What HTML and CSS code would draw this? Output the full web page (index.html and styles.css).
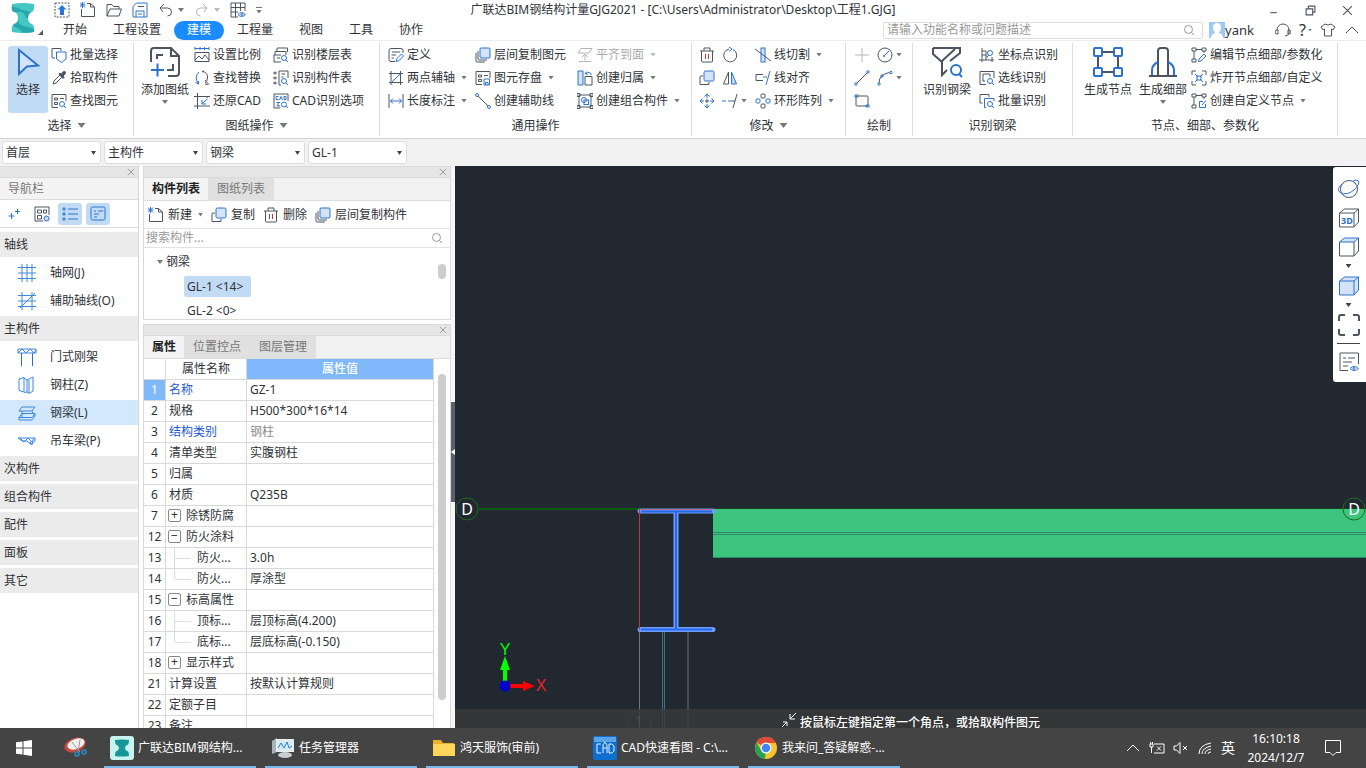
FILE: index.html
```html
<!DOCTYPE html>
<html lang="zh-CN">
<head>
<meta charset="utf-8">
<title>广联达BIM钢结构计量GJG2021</title>
<link rel="stylesheet" href="styles.css">
</head>
<body>
<svg class="sprite" aria-hidden="true">
  <symbol id="i-upload" viewBox="0 0 16 16"><rect x="1" y="1" width="14" height="14" stroke-dasharray="2 1.2"/><path class="bf" d="M8 3l4.500 4.500H10V13H6V7.500H3.500z"/></symbol>
  <symbol id="i-new" viewBox="0 0 16 16"><path d="M1.500 7v7.500h13V5l-4-3.500H7M10.500 1.500V5h4"/><path class="b" d="M0 .5l5 5M5 .5l-5 5M2.500 0v6M0 3h5.500"/></symbol>
  <symbol id="i-open" viewBox="0 0 16 16"><path d="M1 14V2.500h5l1.500 2H13V7M1 14L4 7h11.500L13 14z"/></symbol>
  <symbol id="i-save" viewBox="0 0 16 16"><path class="b" d="M1 15V4.500L4.500 1H15v14zM4 15V9h8v6M6 12h4"/><path d="M6 4.500h6"/></symbol>
  <symbol id="i-undo" viewBox="0 0 16 16"><path d="M2 6h7.500a4 4 0 0 1 0 8M6 2L2 6l3 4"/></symbol>
  <symbol id="i-redo" viewBox="0 0 16 16"><path class="g" d="M13 6H6.500a4 4 0 0 0 0 8M9 2l4 4-3 4"/></symbol>
  <symbol id="i-gridview" viewBox="0 0 16 16"><path d="M1 1h14v8M1 1v14h7M1 5.500h14M1 10h7M5.500 1v14M10.500 1v8"/><path class="b" d="M8 12.500q3.500-4 7.500 0-4 4-7.500 0z"/><circle class="b" cx="12" cy="12.500" r="1"/></symbol>
  <symbol id="i-search" viewBox="0 0 16 16"><circle class="m" cx="7.500" cy="7.500" r="4"/><path class="m" d="M10.500 10.500l2.500 2.500"/></symbol>
  <symbol id="i-x" viewBox="0 0 10 10"><path d="M1 1l8 8M9 1L1 9"/></symbol>

  <symbol id="i-cursor" viewBox="0 0 28 28"><path class="b w2" fill="#d3e3fa" d="M5 2l19 15.500-11 1L5 26z"/></symbol>
  <symbol id="i-sheet" viewBox="0 0 32 32"><path class="w2" d="M2 16V5q0-3 3-3h17l8 8v17q0 3-3 3h-8M22 2v8h8M8 13V9h6M24 18v6h-6"/><path class="b w2" d="M2 24h13M8.500 17.500v13"/></symbol>
  <symbol id="i-funnel" viewBox="0 0 32 32"><path class="w2" d="M2 2h27v5L19 15M2 2v6l9 8v13l5-5M11 15L24 3"/><circle class="b w2" cx="25" cy="24" r="5"/><path class="b w2" d="M28 28l3 3"/></symbol>
  <symbol id="i-nodes" viewBox="0 0 32 32"><path class="w2" d="M11 6h10M11 26h10M6 11v10M26 11v10"/><g class="b w2"><rect x="2" y="2" width="8" height="8" rx="1"/><rect x="22" y="2" width="8" height="8" rx="1"/><rect x="2" y="22" width="8" height="8" rx="1"/><rect x="22" y="22" width="8" height="8" rx="1"/></g></symbol>
  <symbol id="i-detail" viewBox="0 0 32 32"><path class="w2" d="M11 30V5q0-3 3-3h4q3 0 3 3v25"/><path class="b w2" d="M11 16q-6 3-6 8v6M21 16q6 3 6 8v6"/><path class="w2" d="M2 30h28"/></symbol>

  <symbol id="i-batch" viewBox="0 0 16 16"><path d="M4 11H1.500Q1 11 1 10V1.500h9V4"/><path class="b" d="M5.500 5h9.500v7l-4.500 3.500L5.500 12z"/></symbol>
  <symbol id="i-pick" viewBox="0 0 16 16"><path d="M2 14l1-3 6-6 2 2-6 6z"/><path class="df" d="M8 4l1-1 1.500 1L12.500 1.500Q15 1 14.500 3.500L12 6l1 1.500-1 1z"/></symbol>
  <symbol id="i-find" viewBox="0 0 16 16"><path d="M7 14.500H1V1.500h14V8M3.500 5h3v2h-3zM3.500 9.500h3v2h-3zM9 5.500h4"/><circle class="b" cx="11" cy="11" r="2.500"/><path class="b" d="M13 13l2 2"/></symbol>
  <symbol id="i-scale" viewBox="0 0 16 16"><path class="b" d="M1 1.500h14M1 0v3M6 0v3M10.500 0v3M15 0v3"/><path d="M1 5.500h14v9H1zM1 13l4-4 3 3 3-4 4 5"/></symbol>
  <symbol id="i-replace" viewBox="0 0 16 16"><path class="b" d="M5 2Q0 7 4 13M1.500 12.500L4.500 14V11"/><path d="M8 1.500Q14 2 13.500 8q0 3-2.500 5M8 2l2-1.500M11 10l4 4.500M11 14l3 .5"/></symbol>
  <symbol id="i-restore" viewBox="0 0 16 16"><path d="M3.500 0v16M0 3.500h16M0 13h16M13 3.500V5"/><path class="b" d="M13.500 6L8 10.500M8 7v4h4"/></symbol>
  <symbol id="i-floors" viewBox="0 0 16 16"><path d="M4 4V1h10.500v4M2 4.500h11V8M1 8h7M1 8v7h7M2 4.500V8M4 11h3"/><circle class="b" cx="11" cy="11" r="2.500"/><path class="b" d="M13 13l2 2"/></symbol>
  <symbol id="i-parts" viewBox="0 0 16 16"><path d="M0 3h4M0 8h4M0 13h4M2 1.500v3M2 6.500v3M2 11.500v3M6 15V1h9v7M6 15h2M8.500 4H12M8.500 7h2"/><circle class="b" cx="11" cy="11" r="2.500"/><path class="b" d="M13 13l2 2"/></symbol>
  <symbol id="i-cad" viewBox="0 0 16 16"><path d="M7 15H1V1h14v7"/><path class="b" d="M5.500 3.500H3v3h2.500M6.500 7l1.500-3.500L9.500 7M11 3.500v3h2v-3zM3.500 9.500H7M5 9.500V13M3.500 13H7"/><circle class="b" cx="11" cy="11.500" r="2.500"/><path class="b" d="M13 13l2 2"/></symbol>

  <symbol id="i-define" viewBox="0 0 16 16"><path d="M7 14.500H3q-2 0-2-2v-9q0-2 2-2h10q2 0 2 2V6M4 5h8M3.500 8H8M3.500 11H6"/><path class="b" d="M8 14.500L8.500 12l5-5 2 2-5 5z"/></symbol>
  <symbol id="i-twopoint" viewBox="0 0 16 16"><path d="M3 1v14M1 3.500h14M12.500 1v14M1 12.500h14"/><path class="b" d="M3 13L13 3"/></symbol>
  <symbol id="i-length" viewBox="0 0 16 16"><path d="M1 1v14M15 1v14"/><path class="b" d="M2.500 8h11M5 5.500L2.500 8 5 10.500M11 5.500L13.500 8 11 10.500"/></symbol>
  <symbol id="i-layercopy" viewBox="0 0 16 16"><rect class="b" x="5" y="1" width="10" height="10" rx="1" fill="#d3e3fa"/><path d="M3 4v8q0 1 1 1h8M1 6v8q0 1 1 1h8"/></symbol>
  <symbol id="i-copy" viewBox="0 0 16 16"><path d="M4 6H1.500Q1 6 1 7v7.500h9V12"/><rect class="b" x="5" y="1" width="10" height="10" rx="1.500" fill="#d3e3fa"/></symbol>
  <symbol id="i-store" viewBox="0 0 16 16"><path d="M7 14.500H1V1.500h14V8M3.500 5h3v2h-3zM3.500 9.500h3v2h-3zM9 5.500h4"/><path class="b" d="M9 9h5.500v6H9zM10.500 15v-2.500h2.500V15"/></symbol>
  <symbol id="i-auxline" viewBox="0 0 16 16"><circle class="b" cx="2" cy="2" r="1.500"/><circle class="b" cx="14" cy="14" r="1.500"/><path d="M3 3l10 10"/></symbol>
  <symbol id="i-align" viewBox="0 0 16 16"><path class="g" d="M4 1.500h11L12 6H1zM2 14.500h12M8 7v6M5 10l3-3 3 3"/></symbol>
  <symbol id="i-belong" viewBox="0 0 16 16"><path class="b" d="M1 1h5v14H1z" fill="#d3e3fa"/><path d="M8 6.500h7V15H8z"/><path class="b" d="M8.500 3.500Q14 1 14 5M10 1.500l-2 2 2.500 1"/></symbol>
  <symbol id="i-combo" viewBox="0 0 16 16"><path d="M2 2h12v12H2zM0 .5h3v3H0zM13 .5h3v3h-3zM0 12.500h3v3H0zM13 12.500h3v3h-3z"/><circle class="b" cx="7" cy="7" r="2.500"/><rect class="b" x="7" y="7" width="4.500" height="4.500"/></symbol>

  <symbol id="i-trash" viewBox="0 0 16 16"><path d="M1 4h14M5 4V1h6v3M2.500 4v10q0 1 1 1h9q1 0 1-1V4"/><path class="r" d="M6.500 7v5M9.500 7v5"/></symbol>
  <symbol id="i-rotate" viewBox="0 0 16 16"><path d="M7 2a6.500 6.500 0 1 0 4 .5"/><path class="b" d="M7 0l3 2-3 2.500"/></symbol>
  <symbol id="i-mirror" viewBox="0 0 16 16"><path d="M6.500 2v12H1.500z"/><path class="b" fill="#c3daf8" d="M9.500 2v12h5z"/></symbol>
  <symbol id="i-move" viewBox="0 0 16 16"><path class="b" d="M5.500 3.500L8 1l2.500 2.500M5.500 12.500L8 15l2.500-2.500M3.500 5.500L1 8l2.500 2.500M12.500 5.500L15 8l-2.500 2.500M8 1v4M8 11v4M1 8h4M11 8h4"/><path d="M8 6v4M6 8h4"/></symbol>
  <symbol id="i-extend" viewBox="0 0 16 16"><path class="b" d="M0 8h4M6 8h4"/><path d="M15 1l-4 14M10 8h3"/></symbol>
  <symbol id="i-cut" viewBox="0 0 16 16"><rect class="b" x="6" y="1" width="4" height="14" fill="#d3e3fa"/><path d="M0 2l16 12"/></symbol>
  <symbol id="i-linealign" viewBox="0 0 16 16"><path d="M8 4.500H1v6h7"/><path class="b" d="M15 1l-4 14M12 7h-4"/></symbol>
  <symbol id="i-array" viewBox="0 0 16 16"><rect x="6" y="1" width="4" height="4" rx="1"/><rect x="6" y="11" width="4" height="4" rx="1"/><rect class="b" x="1" y="6" width="4" height="4" rx="1"/><rect class="b" x="11" y="6" width="4" height="4" rx="1"/></symbol>
  <symbol id="i-point" viewBox="0 0 16 16"><path class="g" d="M8 1v5M8 10v5M1 8h5M10 8h5M7 7h2v2H7z"/></symbol>
  <symbol id="i-circle" viewBox="0 0 16 16"><circle cx="8" cy="8" r="7"/><path class="b" d="M7 9l5-5M6.500 8.500h1v1h-1z"/></symbol>
  <symbol id="i-line" viewBox="0 0 16 16"><path d="M3 13L13 3"/><circle class="b" cx="2" cy="14" r="1.200"/><circle class="b" cx="14" cy="2" r="1.200"/></symbol>
  <symbol id="i-arc" viewBox="0 0 16 16"><path d="M2 13Q2 4 13 2.500"/><circle class="b" cx="2" cy="14" r="1.200"/><circle class="b" cx="14" cy="2.500" r="1.200"/><circle class="b" cx="5" cy="6" r="1.200"/></symbol>
  <symbol id="i-rect" viewBox="0 0 16 16"><rect x="2" y="3" width="12" height="10" rx="1"/><path class="b" d="M1 2h3v2H1zM12 12h3v2h-3z"/></symbol>
  <symbol id="i-coord" viewBox="0 0 16 16"><path d="M3 1v14M0 13h15M3 4h4M3 8h4M7 4v9M13 10v5"/><circle class="b" cx="11" cy="6" r="2.500"/><path class="b" d="M9.500 8L7.500 11"/></symbol>
  <symbol id="i-linepick" viewBox="0 0 16 16"><path d="M7 14.500H1V1.500h14V8M4 11V4h7v3M4 11h2"/><circle class="b" cx="11" cy="11" r="2.500"/><path class="b" d="M13 13l2 2"/></symbol>
  <symbol id="i-batchid" viewBox="0 0 16 16"><path d="M3.500 10H1V1.500h9V4"/><path class="b" d="M7 14.500H5.500v-9H15V8"/><circle class="b" cx="11" cy="11" r="2.500"/><path class="b" d="M13 13l2 2"/></symbol>
  <symbol id="i-nodeedit" viewBox="0 0 16 16"><path d="M1 1h4v3H1zM11 1h4v3h-4zM1 12h4v3H1zM5 2.500h6M3 4v8M13 4v2"/><path class="b" d="M7.500 14.500L8 12l5-5 2 2-5 5z"/></symbol>
  <symbol id="i-explode" viewBox="0 0 16 16"><path d="M1 5V1h4M11 1h4v4M1 11v4h4M11 15h4v-4"/><path class="b" d="M4 4l3 3M12 4L9 7M4 12l3-3M12 12L9 9M7 5v2H5M9 5v2h2M7 11V9H5M9 11V9h2"/></symbol>
  <symbol id="i-nodenew" viewBox="0 0 16 16"><path d="M1 1h4v3H1zM11 1h4v3h-4zM1 12h4v3H1zM5 2.500h6M3 4v8M13 4v2"/><path class="b" d="M12 8.500H8.500v6h6V11M11 12l4-4.500"/></symbol>

  <symbol id="i-plus2" viewBox="0 0 12 12"><path class="b" d="M3.500 5v6M.5 8h6M9.500 1v5M7 3.500h5"/></symbol>
  <symbol id="i-cards" viewBox="0 0 16 16"><path d="M9 15H1V1h14v8M3.500 4h4v3h-4zM9.500 4h3v3h-3zM3.500 9.500h4V13h-4z"/><circle class="b" cx="12.500" cy="12.500" r="2.500" fill="#c3daf8"/></symbol>
  <symbol id="i-list" viewBox="0 0 16 16"><path class="b" d="M6 3h10M6 8h10M6 13h10M1 2h2v2H1zM1 7h2v2H1zM1 12h2v2H1z"/></symbol>
  <symbol id="i-note" viewBox="0 0 16 16"><rect class="b" x="1" y="1" width="14" height="13" rx="1.500"/><path class="b" d="M4 5h2M8 5h5M4 8h5M4 11h3"/></symbol>

  <symbol id="n-grid" viewBox="0 0 20 20"><path class="n" d="M5 1v18M10 1v18M15 1v18M1 4.500h18M1 10h18M1 15.500h18"/></symbol>
  <symbol id="n-aux" viewBox="0 0 20 20"><path class="n" d="M5 1v18M15 1v18M1 4.500h18M1 10h18M1 15.500h18M3 17L18 2"/></symbol>
  <symbol id="n-frame" viewBox="0 0 20 20"><path class="n" d="M1 2h18v4H1zM1 6l4-4 4 4 4-4 4 4 2-3"/><path class="b" d="M4.500 6v13M15.500 6v13"/></symbol>
  <symbol id="n-column" viewBox="0 0 20 20"><path class="n" d="M2 4l5-1.500V17l-5-1.500zM7 3l3 2v12l-3 .5M10 5l6-3v14l-4 2.500-2-1.500M12 5v13"/></symbol>
  <symbol id="n-beam" viewBox="0 0 20 20"><path class="n" d="M5 4h13l-3 4H2zM2 14.500h13l3-4H5zM5 8v6M15 8l1 3M2 14.500V17h13l3-4v-2.500"/></symbol>
  <symbol id="n-crane" viewBox="0 0 20 20"><path class="n" d="M1 7h17v3q-3 2-4 3-2-1-4-3H5zM3 7l4 4 4-4 4 4 2-4"/><circle class="n" cx="14.500" cy="12" r="1.500"/></symbol>

  <symbol id="v-orbit" viewBox="0 0 22 22"><circle cx="11" cy="11" r="8.500"/><path class="b" d="M4 6Q-2 11 2 14.500 9 18 16 12 23 5 20 2.500q-2-1-5 .5"/></symbol>
  <symbol id="v-cube" viewBox="0 0 22 22"><path d="M1.500 6v14H16V6M20.500 2v13L16 20"/><path class="b" fill="#d3e3fa" d="M1.500 6l5-4h14L16 6z"/></symbol>
  <symbol id="v-solid" viewBox="0 0 22 22"><path class="b" fill="#d3e3fa" d="M1.500 6l5-4h14v13L16 20H1.500zM1.500 6H16v14M16 6l4.500-4"/></symbol>
  <symbol id="v-fit" viewBox="0 0 22 22"><path class="w2" d="M1 7V3q0-2 2-2h4M15 1h4q2 0 2 2v4M1 15v4q0 2 2 2h4M15 21h4q2 0 2-2v-4"/></symbol>
  <symbol id="v-note" viewBox="0 0 22 22"><path d="M10 19.500H2V2h18.500v11M5 7h3M10 7h7M5 11h9M5 15h5"/><path class="b" d="M12 17.500q4-4 8.500 0-4.500 4-8.500 0z"/><circle class="b" cx="16" cy="17.500" r="1"/></symbol>
</svg>

<div class="window">
  <header class="app-header">
    <svg class="logo" viewBox="0 0 30 32" role="img" aria-label="GJG"><path fill="#45c8c4" d="M4 2q11-2 22 0 1 6-2 8-4 1-4 6t4 6q3 2 2 8-11 2-22 0-1-6 2-8 4-1 4-6T6 10Q3 8 4 2z"/><path fill="#27a7ad" d="M4 4q9 4 19 6-3 2-3 6h-2q-1-5-5-6L6 10Q3 9 4 4zM10 18q0 3 3 5l13 4v3q-6 1-11 1-3-4-10-7l1-2q4-1 4-4z"/></svg>
    <div class="title-row">
      <div class="quick">
        <button aria-label="上传"><svg><use href="#i-upload"/></svg></button>
        <button aria-label="新建工程"><svg><use href="#i-new"/></svg></button>
        <button aria-label="打开"><svg><use href="#i-open"/></svg></button>
        <button aria-label="保存"><svg><use href="#i-save"/></svg></button>
        <button aria-label="撤销"><svg><use href="#i-undo"/></svg><i class="caret"></i></button>
        <button aria-label="恢复"><svg><use href="#i-redo"/></svg><i class="caret faint"></i></button>
        <button aria-label="显示设置"><svg><use href="#i-gridview"/></svg></button>
        <button class="more" aria-label="更多"><i class="caret"></i></button>
      </div>
      <h1>广联达BIM钢结构计量GJG2021 - [C:\Users\Administrator\Desktop\工程1.GJG]</h1>
      <div class="win-controls">
        <button aria-label="最小化"><svg viewBox="0 0 10 10"><path d="M2 7h6"/></svg></button>
        <button aria-label="还原"><svg viewBox="0 0 10 10"><path d="M1 3.500h6V9H1zM3 3.500V1h6v5.500H7"/></svg></button>
        <button aria-label="关闭"><svg><use href="#i-x"/></svg></button>
      </div>
    </div>
    <i class="corner"></i>
    <div class="tab-row">
      <nav class="tabs">
        <button>开始</button><button>工程设置</button><button class="active">建模</button><button>工程量</button><button>视图</button><button>工具</button><button>协作</button>
      </nav>
      <label class="find"><input type="text" aria-label="搜索功能" placeholder="请输入功能名称或问题描述"><svg><use href="#i-search"/></svg></label>
      <div class="account">
        <svg class="avatar" viewBox="0 0 16 16"><path fill="#9cc9f5" stroke="none" d="M0 0h16v16H0z"/><path fill="#fff" stroke="none" d="M4 4q1-3 4-3t4 3v3q-1 3-2.500 3.500Q14 12 14 16H2q0-4 4.500-5.500Q5 10 4 7z"/></svg>
        <span>yank</span>
      </div>
      <div class="help">
        <button aria-label="客服"><svg viewBox="0 0 16 16"><path d="M2 8a6 6 0 0 1 12 0v3q-1 3-4 3M2 8q-2 0-2 2t2 2h1V8zM14 8q2 0 2 2t-2 2h-1V8z"/></svg></button>
        <button class="q" aria-label="帮助">?<i class="caret"></i></button>
        <button aria-label="皮肤"><svg viewBox="0 0 16 16"><path d="M5 2q3 2 6 0l4 3-2 3-1.500-1v7h-7V7L3 8 1 5z"/></svg></button>
        <button aria-label="收起"><svg viewBox="0 0 16 16"><path d="M2 11l6-6 6 6"/></svg></button>
      </div>
    </div>
  </header>

  <section class="ribbon">
    <div class="group g-select">
      <div class="cmds">
        <button class="big on"><svg><use href="#i-cursor"/></svg>选择</button>
        <div class="col">
          <button class="cmd"><svg><use href="#i-batch"/></svg>批量选择</button>
          <button class="cmd"><svg><use href="#i-pick"/></svg>拾取构件</button>
          <button class="cmd"><svg><use href="#i-find"/></svg>查找图元</button>
        </div>
      </div>
      <h2>选择<i class="caret wide"></i></h2>
    </div>
    <div class="group g-sheet">
      <div class="cmds">
        <button class="big"><svg><use href="#i-sheet"/></svg>添加图纸<i class="caret"></i></button>
        <div class="col">
          <button class="cmd"><svg><use href="#i-scale"/></svg>设置比例</button>
          <button class="cmd"><svg><use href="#i-replace"/></svg>查找替换</button>
          <button class="cmd"><svg><use href="#i-restore"/></svg>还原CAD</button>
        </div>
        <div class="col">
          <button class="cmd"><svg><use href="#i-floors"/></svg>识别楼层表</button>
          <button class="cmd"><svg><use href="#i-parts"/></svg>识别构件表</button>
          <button class="cmd"><svg><use href="#i-cad"/></svg>CAD识别选项</button>
        </div>
      </div>
      <h2>图纸操作<i class="caret wide"></i></h2>
    </div>
    <div class="group g-common">
      <div class="cmds">
        <div class="col">
          <button class="cmd"><svg><use href="#i-define"/></svg>定义</button>
          <button class="cmd"><svg><use href="#i-twopoint"/></svg>两点辅轴<i class="caret"></i></button>
          <button class="cmd"><svg><use href="#i-length"/></svg>长度标注<i class="caret"></i></button>
        </div>
        <div class="col">
          <button class="cmd"><svg><use href="#i-layercopy"/></svg>层间复制图元</button>
          <button class="cmd"><svg><use href="#i-store"/></svg>图元存盘<i class="caret"></i></button>
          <button class="cmd"><svg><use href="#i-auxline"/></svg>创建辅助线</button>
        </div>
        <div class="col">
          <button class="cmd off"><svg><use href="#i-align"/></svg>平齐到面<i class="caret"></i></button>
          <button class="cmd"><svg><use href="#i-belong"/></svg>创建归属<i class="caret"></i></button>
          <button class="cmd"><svg><use href="#i-combo"/></svg>创建组合构件<i class="caret"></i></button>
        </div>
      </div>
      <h2>通用操作</h2>
    </div>
    <div class="group g-modify">
      <div class="cmds">
        <div class="col">
          <button class="cmd" aria-label="删除"><svg><use href="#i-trash"/></svg></button>
          <button class="cmd" aria-label="复制"><svg><use href="#i-copy"/></svg></button>
          <button class="cmd" aria-label="移动"><svg><use href="#i-move"/></svg></button>
        </div>
        <div class="col">
          <button class="cmd" aria-label="旋转"><svg><use href="#i-rotate"/></svg></button>
          <button class="cmd" aria-label="镜像"><svg><use href="#i-mirror"/></svg></button>
          <button class="cmd tight" aria-label="延伸"><svg><use href="#i-extend"/></svg><i class="caret"></i></button>
        </div>
        <div class="col">
          <button class="cmd"><svg><use href="#i-cut"/></svg>线切割<i class="caret"></i></button>
          <button class="cmd"><svg><use href="#i-linealign"/></svg>线对齐</button>
          <button class="cmd"><svg><use href="#i-array"/></svg>环形阵列<i class="caret"></i></button>
        </div>
      </div>
      <h2>修改<i class="caret wide"></i></h2>
    </div>
    <div class="group g-draw">
      <div class="cmds">
        <div class="col">
          <button class="cmd" aria-label="点"><svg><use href="#i-point"/></svg></button>
          <button class="cmd" aria-label="直线"><svg><use href="#i-line"/></svg></button>
          <button class="cmd" aria-label="矩形"><svg><use href="#i-rect"/></svg></button>
        </div>
        <div class="col">
          <button class="cmd tight" aria-label="圆"><svg><use href="#i-circle"/></svg><i class="caret"></i></button>
          <button class="cmd tight" aria-label="弧"><svg><use href="#i-arc"/></svg><i class="caret"></i></button>
        </div>
      </div>
      <h2>绘制</h2>
    </div>
    <div class="group g-beam">
      <div class="cmds">
        <button class="big"><svg><use href="#i-funnel"/></svg>识别钢梁</button>
        <div class="col">
          <button class="cmd"><svg><use href="#i-coord"/></svg>坐标点识别</button>
          <button class="cmd"><svg><use href="#i-linepick"/></svg>选线识别</button>
          <button class="cmd"><svg><use href="#i-batchid"/></svg>批量识别</button>
        </div>
      </div>
      <h2>识别钢梁</h2>
    </div>
    <div class="group g-node">
      <div class="cmds">
        <button class="big"><svg><use href="#i-nodes"/></svg>生成节点</button>
        <button class="big"><svg><use href="#i-detail"/></svg>生成细部<i class="caret"></i></button>
        <div class="col">
          <button class="cmd"><svg><use href="#i-nodeedit"/></svg>编辑节点细部/参数化</button>
          <button class="cmd"><svg><use href="#i-explode"/></svg>炸开节点细部/自定义</button>
          <button class="cmd"><svg><use href="#i-nodenew"/></svg>创建自定义节点<i class="caret"></i></button>
        </div>
      </div>
      <h2>节点、细部、参数化</h2>
    </div>
  </section>

  <div class="filters">
    <label><select aria-label="楼层"><option>首层</option></select><i class="caret"></i></label>
    <label><select aria-label="构件分类"><option>主构件</option></select><i class="caret"></i></label>
    <label><select aria-label="构件类型"><option>钢梁</option></select><i class="caret"></i></label>
    <label><select aria-label="构件"><option>GL-1</option></select><i class="caret"></i></label>
  </div>

  <main class="workspace">
    <aside class="nav">
      <div class="strip"><button aria-label="关闭导航栏"><svg><use href="#i-x"/></svg></button></div>
      <h2>导航栏</h2>
      <div class="nav-tools">
        <button aria-label="展开"><svg class="small"><use href="#i-plus2"/></svg></button>
        <button aria-label="卡片"><svg><use href="#i-cards"/></svg></button>
        <button class="on" aria-label="列表"><svg><use href="#i-list"/></svg></button>
        <button class="on" aria-label="说明"><svg><use href="#i-note"/></svg></button>
      </div>
      <div class="nav-list">
        <h3>轴线</h3>
        <a href="#"><svg><use href="#n-grid"/></svg>轴网(J)</a>
        <a href="#"><svg><use href="#n-aux"/></svg>辅助轴线(O)</a>
        <h3>主构件</h3>
        <a href="#"><svg><use href="#n-frame"/></svg>门式刚架</a>
        <a href="#"><svg><use href="#n-column"/></svg>钢柱(Z)</a>
        <a href="#" class="on"><svg><use href="#n-beam"/></svg>钢梁(L)</a>
        <a href="#"><svg><use href="#n-crane"/></svg>吊车梁(P)</a>
        <h3>次构件</h3>
        <h3>组合构件</h3>
        <h3>配件</h3>
        <h3>面板</h3>
        <h3>其它</h3>
      </div>
    </aside>

    <div class="side">
      <section class="panel">
        <div class="strip"><button aria-label="关闭构件列表"><svg><use href="#i-x"/></svg></button></div>
        <div class="panel-tabs"><button class="active">构件列表</button><button>图纸列表</button></div>
        <div class="panel-tools">
          <button><svg><use href="#i-new"/></svg>新建<i class="caret"></i></button>
          <button><svg><use href="#i-copy"/></svg>复制</button>
          <button><svg><use href="#i-trash"/></svg>删除</button>
          <button><svg><use href="#i-layercopy"/></svg>层间复制构件</button>
        </div>
        <label class="panel-search"><input type="text" aria-label="搜索构件" placeholder="搜索构件..."><svg><use href="#i-search"/></svg></label>
        <div class="tree">
          <ul>
            <li class="root"><i class="caret"></i>钢梁</li>
            <li><span class="on">GL-1 &lt;14&gt;</span></li>
            <li><span>GL-2 &lt;0&gt;</span></li>
          </ul>
          <div class="track"><i></i></div>
        </div>
      </section>
      <section class="panel props">
        <div class="strip"><button aria-label="关闭属性"><svg><use href="#i-x"/></svg></button></div>
        <div class="panel-tabs"><button class="active">属性</button><button>位置控点</button><button>图层管理</button></div>
        <div class="sheet">
          <table>
            <thead><tr><th></th><th>属性名称</th><th class="val">属性值</th></tr></thead>
            <tbody>
              <tr><th class="on">1</th><td class="link">名称</td><td>GZ-1</td></tr>
              <tr><th>2</th><td>规格</td><td>H500*300*16*14</td></tr>
              <tr><th>3</th><td class="link">结构类别</td><td class="dim">钢柱</td></tr>
              <tr><th>4</th><td>清单类型</td><td>实腹钢柱</td></tr>
              <tr><th>5</th><td>归属</td><td></td></tr>
              <tr><th>6</th><td>材质</td><td>Q235B</td></tr>
              <tr><th>7</th><td><button class="fold" aria-label="展开">+</button>除锈防腐</td><td></td></tr>
              <tr><th>12</th><td><button class="fold" aria-label="折叠">−</button>防火涂料</td><td></td></tr>
              <tr><th>13</th><td class="child"><i class="branch"></i>防火...</td><td>3.0h</td></tr>
              <tr><th>14</th><td class="child"><i class="branch last"></i>防火...</td><td>厚涂型</td></tr>
              <tr><th>15</th><td><button class="fold" aria-label="折叠">−</button>标高属性</td><td></td></tr>
              <tr><th>16</th><td class="child"><i class="branch"></i>顶标...</td><td>层顶标高(4.200)</td></tr>
              <tr><th>17</th><td class="child"><i class="branch last"></i>底标...</td><td>层底标高(-0.150)</td></tr>
              <tr><th>18</th><td><button class="fold" aria-label="展开">+</button>显示样式</td><td></td></tr>
              <tr><th>21</th><td>计算设置</td><td>按默认计算规则</td></tr>
              <tr><th>22</th><td>定额子目</td><td></td></tr>
              <tr><th>23</th><td>备注</td><td></td></tr>
            </tbody>
          </table>
          <div class="track long"><i></i></div>
        </div>
      </section>
    </div>

    <div class="splitter"><button aria-label="收起面板"></button></div>

    <section class="canvas">
      <svg class="drawing" role="img" aria-label="钢柱与钢梁平面图">
        <path d="M24 343H185" stroke="#0b5c12" stroke-width="2"/>
        <path d="M258 343H2000" stroke="#0b5c12"/>
        <rect x="258" y="343" width="100%" height="49" fill="#3cc47e"/>
        <path d="M258 366.500H2000M258 368.500H2000M258 391.500H2000" stroke="#2e8a70"/>
        <path d="M184.500 464V562" stroke="#6f767c"/>
        <path d="M207.500 464V562M209.500 464V562" stroke="#3f7180"/>
        <path d="M233 464V562" stroke="#3d5157" stroke-width="2"/>
        <path d="M185 345H258M221 345V463M185 463.500H258" stroke="#6d9dfb" stroke-width="5" stroke-linecap="round"/>
        <path d="M186 345.500H257M221 345V463M186 463.500H257" stroke="#2b66ea" stroke-width="2"/>
        <path d="M184.500 343V464" stroke="#b53a42"/>
        <path d="M185 343.500H258" stroke="#b06a92"/>
        <g fill="none" stroke="#1c6b24"><circle cx="12" cy="343" r="11"/><circle cx="184" cy="557" r="12"/></g>
        <text class="axis" x="12" y="349">D</text>
        <svg class="pin" x="100%"><circle cx="-12" cy="343" r="11" fill="none" stroke="#1c6b24"/><text class="axis" x="-12" y="349">D</text></svg>
        <text class="one" x="184" y="559">1</text>
        <path d="M50 520V502" stroke="#0f0" stroke-width="4"/><path d="M45 504L50 490l5 14z" fill="#0f0"/>
        <path d="M50 520H70" stroke="#f00" stroke-width="4"/><path d="M68 515l12 5-12 5z" fill="#f00"/>
        <circle cx="50" cy="520" r="5.500" fill="#0000c8"/>
        <text class="ucs y" x="50" y="489">Y</text><text class="ucs x" x="86" y="525">X</text>
      </svg>
      <div class="prompt"><svg viewBox="0 0 16 16"><path d="M15 1L9 7M9 2v5h5M1 15l5-5M2 10h4v4"/></svg>按鼠标左键指定第一个角点，或拾取构件图元</div>
      <div class="viewbar">
        <button aria-label="动态观察"><svg><use href="#v-orbit"/></svg></button>
        <button aria-label="三维"><svg viewBox="0 0 22 22"><path d="M1.500 6h14.500v14H1.500zM1.500 6l5-4H20.500V15L16 20M16 6l4.500-4"/><text class="cube-text" x="3" y="16.500">3D</text></svg></button>
        <button aria-label="俯视"><svg><use href="#v-cube"/></svg><i class="caret"></i></button>
        <button aria-label="实体"><svg><use href="#v-solid"/></svg><i class="caret"></i></button>
        <button aria-label="全屏"><svg><use href="#v-fit"/></svg></button>
        <hr>
        <button aria-label="显示设置"><svg><use href="#v-note"/></svg></button>
      </div>
    </section>
  </main>

  <footer class="taskbar">
    <button class="start" aria-label="开始菜单"><svg viewBox="0 0 16 16"><path d="M0 2.300L6.500 1.400V7.500H0zM7.500 1.300L16 0v7.500H7.500zM0 8.500h6.500v6.100L0 13.700zM7.500 8.500H16V16l-8.500-1.300z"/></svg></button>
    <button class="snip" aria-label="截图工具"><svg viewBox="0 0 24 24"><ellipse cx="11" cy="9" rx="11" ry="7" transform="rotate(-20 11 9)" fill="#c8473f"/><ellipse cx="12" cy="8" rx="9" ry="5" transform="rotate(-20 12 8)" fill="#f1eeee"/><path d="M8 6l8 10M16 4l-2 12" stroke="#999" fill="none"/><g fill="none" stroke="#2f7fa8" stroke-width="2"><circle cx="13" cy="18" r="2"/><circle cx="20" cy="16" r="2"/></g></svg></button>
    <div class="tasks">
      <button><svg viewBox="0 0 24 24"><rect width="24" height="24" rx="3" fill="#c9f3ee"/><path fill="#16959a" d="M5 4q7-1 14 0 0 5-2 5-2 1-2 3t2 3q2 0 2 5-7 1-14 0 0-5 2-5 2-1 2-3T7 9Q5 9 5 4z"/></svg>广联达BIM钢结构...</button>
      <button><svg viewBox="0 0 24 24"><path fill="#a9b3b8" d="M1 5l5-3v14l-5 2z"/><rect x="5" y="3" width="18" height="13" fill="#e7ecee"/><rect x="7" y="5" width="14" height="9" fill="#d3e9f8"/><path d="M7 12l3-5 3 5 3-6 2 6 3-2" fill="none" stroke="#2b7fc0"/><ellipse cx="14" cy="19" rx="7" ry="3" fill="#c9cfd1"/></svg>任务管理器</button>
      <button><svg viewBox="0 0 24 24"><path fill="#e8b02c" d="M1 4h8l2 3h11v13H1z"/><path fill="#ffd65c" d="M1 8h22v12H1z"/></svg>鸿天服饰(审前)</button>
      <button><svg viewBox="0 0 24 24"><rect width="24" height="24" rx="2" fill="#0f6fd0"/><rect x="1" y="1" width="22" height="5" fill="#5aa5e8"/><path d="M8 8H4v9h4M10 17V9l2-3 2 3v8M10 12h4M16 8h3l2 2v5l-2 2h-3z" fill="none" stroke="#e6f2ff"/></svg>CAD快速看图 - C:\...</button>
      <button><svg viewBox="0 0 24 24"><circle cx="12" cy="12" r="11" fill="#f6c42c"/><path fill="#de4b3b" d="M12 12L2.500 6.500A11 11 0 0 1 22 7H12z"/><path fill="#29a257" d="M12 12l-1 11A11 11 0 0 1 2.500 6.500l5 8z"/><circle cx="12" cy="12" r="5.500" fill="#fff"/><circle cx="12" cy="12" r="4.300" fill="#4285f4"/></svg>我来问_答疑解惑-...</button>
    </div>
    <div class="tray">
      <svg viewBox="0 0 16 16"><path d="M2 11l6-6 6 6"/></svg>
      <svg viewBox="0 0 16 16"><path d="M5 4h10v9H5M1 4h3v3H1zM2.500 7v6M1.500 2v2M3.500 2v2M8 6.500l4 4M12 6.500l-4 4"/></svg>
      <svg viewBox="0 0 16 16"><path d="M1 6h2.500L7 2.500v11L3.500 10H1zM10 6l4 4M14 6l-4 4"/></svg>
      <svg viewBox="0 0 16 16"><path d="M2 14Q2 5 14 3M5 14q0-6 9-8M8 14q0-4 6-5M11 14q0-2 3-2"/></svg>
      <span class="ime">英</span>
      <time>16:10:18<br>2024/12/7</time>
      <svg class="notice" viewBox="0 0 18 18"><path d="M1.500 1.500h15v12H12l-3 3-3-3H1.500z"/></svg>
    </div>
  </footer>
</div>
</body>
</html>
```
FILE: styles.css
```css
* { box-sizing: border-box; }
body {
  margin: 0;
  font: 12px/16px "Noto Sans", "Noto Sans CJK SC", sans-serif;
  color: #2f3338;
}
button, input, select { font: inherit; color: inherit; }
button { margin: 0; padding: 0; border: 0; background: none; }
h1, h2, h3, ul { margin: 0; padding: 0; font-size: 12px; font-weight: 400; list-style: none; }
a { color: inherit; text-decoration: none; }
svg { flex: none; width: 16px; height: 16px; fill: none; stroke: #4c5462; }
.sprite { position: absolute; width: 0; height: 0; }
.b { stroke: #2c72cc; }
.bf { fill: #2477e0; stroke: none; }
.df { fill: #4c5462; }
.g { stroke: #b5b5b5; }
.m { stroke: #999; }
.r { stroke: #c0392f; }
.n { stroke: #3d87dc; }
.w2 { stroke-width: 2; }
.caret {
  flex: none;
  display: inline-block;
  width: 6px;
  height: 4px;
  background: #777;
  clip-path: polygon(0 0, 100% 0, 50% 100%);
}
.caret.wide { width: 8px; height: 5px; margin-left: 6px; }
.caret.faint { background: #bbb; }

.window { display: flex; flex-direction: column; height: 100vh; background: #fff; overflow: hidden; }

/* header */
.app-header {
  flex: none;
  display: grid;
  grid-template-columns: 50px minmax(0, 1fr);
  grid-template-rows: 20px 20px;
  border-bottom: 1px solid #ededed;
}
.logo { grid-area: 1 / 1 / 3 / 2; width: 30px; height: 32px; margin: 2px 0 0 8px; stroke: none; }
.corner { grid-area: 2 / 1; align-self: end; justify-self: end; width: 5px; height: 5px; margin: 0 7px 5px 0; background: #555; clip-path: polygon(100% 0, 100% 100%, 0 100%); }
.title-row {
  grid-area: 1 / 1 / 2 / 3;
  display: grid;
  grid-template-columns: 1fr auto 1fr;
  align-items: center;
}
.quick { display: flex; gap: 10px; padding-left: 54px; align-items: center; }
.quick button { display: flex; align-items: center; gap: 4px; }
.quick .more { display: block; height: 7px; border-top: 1px solid #777; padding-top: 2px; }
.quick .more .caret { display: block; }
.win-controls { display: flex; justify-content: flex-end; gap: 26px; padding-right: 13px; }
.win-controls button { display: flex; }
.win-controls svg { width: 11px; height: 11px; }
.tab-row { grid-area: 2 / 2; display: flex; align-items: center; min-width: 0; }
.tabs { display: flex; margin-right: auto; }
.tabs button { height: 19px; padding: 0 13px; border-radius: 10px; white-space: nowrap; }
.tabs .active { background: #1b8cff; color: #fff; }
.find { display: flex; align-items: center; width: 320px; height: 17px; padding: 0 5px 0 3px; border: 1px solid #ddd; border-radius: 2px; }
.find input, .panel-search input { flex: 1; min-width: 0; padding: 0; border: 0; outline: 0; background: none; height: 15px; }
input::placeholder { color: #999; opacity: 1; }
.account { display: flex; align-items: center; width: 72px; padding-left: 6px; font-size: 13px; }
.help { display: flex; align-items: center; gap: 8px; padding-right: 6px; }
.help button { display: flex; align-items: center; gap: 2px; }
.help .q { font-size: 16px; }
.help .caret { width: 4px; height: 3px; }

/* ribbon */
.ribbon { flex: none; display: flex; height: 98px; padding-top: 2px; border-bottom: 1px solid #d4d4d4; overflow: hidden; }
.group { flex: none; display: flex; flex-direction: column; border-right: 1px solid #ddd; margin-bottom: 2px; }
.cmds { flex: none; display: grid; height: 72px; align-items: start; }
.group h2 { display: flex; align-items: center; justify-content: center; height: 21px; }
.g-select .cmds { grid-template-columns: 43px 82px; padding-left: 8px; }
.g-sheet .cmds { grid-template-columns: 53px 79px 106px; padding-left: 7px; }
.g-common .cmds { grid-template-columns: 87px 102px 114px; padding-left: 8px; }
.g-modify .cmds { grid-template-columns: 23px 33px 90px; padding-left: 7px; }
.g-draw .cmds { grid-template-columns: 23px 35px; padding-left: 8px; }
.g-beam .cmds { grid-template-columns: 56px 93px; padding-left: 10px; }
.g-node .cmds { grid-template-columns: 55px 52px 146px; padding-left: 11px; }
.col { display: grid; grid-auto-rows: 23px; }
.cmd { display: flex; align-items: center; gap: 3px; white-space: nowrap; }
.cmd .caret { margin-left: 3px; }
.cmd.tight .caret { margin-left: 0; }
.cmd.off { color: #aaa; }
.cmd.off .caret { background: #bbb; }
.big { display: flex; flex-direction: column; align-items: center; width: 48px; height: 67px; margin-top: 3px; white-space: nowrap; border-radius: 3px; }
.big svg { width: 32px; height: 32px; margin-bottom: 4px; }
.g-select .big { width: 40px; }
.g-select .big svg { width: 28px; height: 32px; }
.big .caret { margin-top: 2px; }
.on { background: #c2dbf5; }

/* filters */
.filters { flex: none; display: flex; gap: 3px; height: 27px; padding: 2px; background: #f2f2f2; }
.filters label { position: relative; width: 99px; height: 23px; }
.filters select { width: 100%; height: 100%; padding: 0 3px; border: 1px solid #ddd; border-radius: 3px; background: #fff; appearance: none; }
.filters .caret { position: absolute; right: 5px; top: 10px; width: 5px; background: #444; }

/* workspace */
.workspace { flex: 1; min-height: 0; display: grid; grid-template-columns: 139px 312px 4px minmax(0, 1fr); background: #fff; }
.strip { flex: none; display: flex; align-items: center; justify-content: flex-end; height: 12px; padding-right: 3px; background: #e6e6e6; border-top: 1px solid #dadada; border-bottom: 1px solid #dadada; }
.strip button { display: flex; }
.strip svg { width: 8px; height: 8px; stroke: #888; }
.nav { border-right: 1px solid #d6d6d6; overflow: hidden; }
.nav h2 { height: 22px; padding: 3px 8px; background: #f3f3f3; color: #777; border-bottom: 1px solid #ddd; }
.nav-tools { display: flex; align-items: center; gap: 4px; height: 28px; padding-left: 2px; border-bottom: 1px solid #ddd; }
.nav-tools button { display: flex; align-items: center; justify-content: center; width: 24px; height: 22px; border-radius: 3px; }
.nav-tools .small { width: 12px; height: 12px; }
.nav-list { display: grid; gap: 3px; padding-top: 4px; }
.nav-list h3, .nav-list a { height: 25px; display: flex; align-items: center; }
.nav-list h3 { padding-left: 4px; background: #ebebeb; }
.nav-list a { gap: 13px; padding-left: 17px; }
.nav-list svg { width: 20px; height: 20px; }
.nav-list .on { background: #d3e7fd; }

.side { display: flex; flex-direction: column; gap: 4px; min-height: 0; padding-left: 4px; }
.panel { flex: none; display: flex; flex-direction: column; border: 1px solid #d9d9d9; border-top: 0; }
.panel-tabs { flex: none; display: flex; height: 23px; background: #f1f1f1; border-bottom: 1px solid #ddd; }
.panel-tabs button { padding: 0 9px; background: #e0e0e0; color: #777; }
.panel-tabs .active { padding: 0 8px; background: #f4f4f4; color: #222; font-weight: 700; }
.panel-tools { display: flex; align-items: center; gap: 8px; height: 28px; padding-left: 4px; border-bottom: 1px solid #e3e3e3; }
.panel-tools button { display: flex; align-items: center; gap: 4px; white-space: nowrap; }
.panel-tools .caret { margin-left: 2px; width: 5px; }
.panel-search { display: flex; align-items: center; height: 19px; padding: 0 5px 0 2px; border-bottom: 1px solid #e3e3e3; }
.tree { display: flex; height: 71px; overflow: hidden; }
.tree ul { flex: 1; padding-top: 2px; }
.tree li { display: flex; align-items: center; height: 24px; padding-left: 40px; }
.tree li.root { gap: 3px; padding-left: 13px; }
.tree li span { padding: 3px 8px 2px 3px; border-radius: 2px; }
.track { width: 16px; padding: 16px 4px 0; }
.track i { display: block; height: 15px; border-radius: 4px; background: #cdcdcd; }
.props { flex: 1; min-height: 0; border-bottom: 0; }
.sheet { flex: 1; min-height: 0; display: flex; overflow: hidden; }
.long { height: 341px; padding-top: 15px; }
.long i { height: 100%; }
table { flex: 1; table-layout: fixed; border-collapse: separate; border-spacing: 0; align-self: flex-start; }
th, td { height: 21px; padding: 0 3px; border: 0 solid #d9d9d9; border-width: 0 1px 1px 0; font-weight: 400; white-space: nowrap; text-align: left; line-height: 16px; }
thead th { text-align: center; }
th:first-child { width: 22px; padding: 0; text-align: center; }
thead th:nth-child(2) { width: 81px; }
thead .val { background: #7fb8fb; color: #fff; font-weight: 500; }
tbody .on { background: #7fb8fb; color: #fff; }
.link { color: #2457d6; }
.dim { color: #8b8b8b; }
.fold { display: inline-block; width: 13px; height: 13px; margin: 0 5px 0 -1px; border: 1px solid #888; border-radius: 2px; line-height: 10px; vertical-align: 1px; }
.child { position: relative; padding-left: 31px; }
.branch { position: absolute; left: 8px; top: 0; width: 17px; height: 100%; border-left: 1px solid #dcdcdc; }
.branch::after { content: ""; display: block; height: 50%; border-bottom: 1px solid #dcdcdc; }
.branch.last { height: 50%; }
.branch.last::after { height: 100%; }

.splitter { padding-top: 236px; background: #f6f6f6; }
.splitter button { display: block; width: 4px; height: 100px; background: #59616a; }
.splitter button::before { content: ""; display: block; width: 4px; height: 6px; background: #fff; clip-path: polygon(100% 0, 100% 100%, 0 50%); }

/* canvas */
.canvas { position: relative; background: #212830; overflow: hidden; }
.drawing { display: block; width: 100%; height: 100%; stroke: none; }
.pin { overflow: visible; stroke: none; }
.axis { font-size: 16px; fill: #fff; text-anchor: middle; }
.one { font-size: 12px; fill: #aaa; text-anchor: middle; }
.ucs { font: 16px "Liberation Sans", sans-serif; text-anchor: middle; }
.ucs.y { fill: #0f0; }
.ucs.x { fill: #e8262c; }
.prompt { position: absolute; inset: auto 0 0; display: flex; align-items: center; justify-content: center; gap: 3px; height: 19px; padding-top: 8px; background: rgba(58, 58, 58, .8); color: #fff; font-weight: 500; }
.prompt svg { stroke: #fff; margin-top: -6px; }
.viewbar { position: absolute; top: 1px; right: 0; display: flex; flex-direction: column; align-items: center; gap: 7px; width: 33px; height: 215px; padding: 11px 2px 8px 0; background: #fff; border-radius: 3px 0 0 3px; }
.viewbar button { display: flex; flex-direction: column; align-items: center; gap: 6px; }
.viewbar svg { width: 22px; height: 22px; }
.viewbar .caret { background: #444; }
.viewbar hr { width: 23px; margin: 0; border: 0; border-top: 1px solid #444; }
.cube-text { font: 700 9px "Noto Sans", sans-serif; fill: #2c72cc; stroke: none; }

/* taskbar */
.taskbar { flex: none; display: flex; height: 40px; background: #444; color: #fff; }
.taskbar > button { display: flex; align-items: center; justify-content: center; }
.start { width: 48px; }
.start svg { fill: #fff; stroke: none; }
.snip { width: 56px; }
.snip svg, .tasks svg { width: 24px; height: 24px; stroke: none; }
.tasks { display: flex; gap: 9px; min-width: 0; }
.tasks button { display: flex; align-items: center; gap: 4px; width: 152px; padding: 2px 6px 0; border-bottom: 2px solid #76b9ed; white-space: nowrap; }
.tray { display: flex; align-items: center; gap: 8px; margin-left: auto; padding-right: 24px; }
.tray svg { stroke: #fff; }
.ime { font-size: 14px; }
time { width: 66px; margin-right: 7px; line-height: 19px; text-align: center; }
.tray .notice { width: 18px; height: 18px; }
```
